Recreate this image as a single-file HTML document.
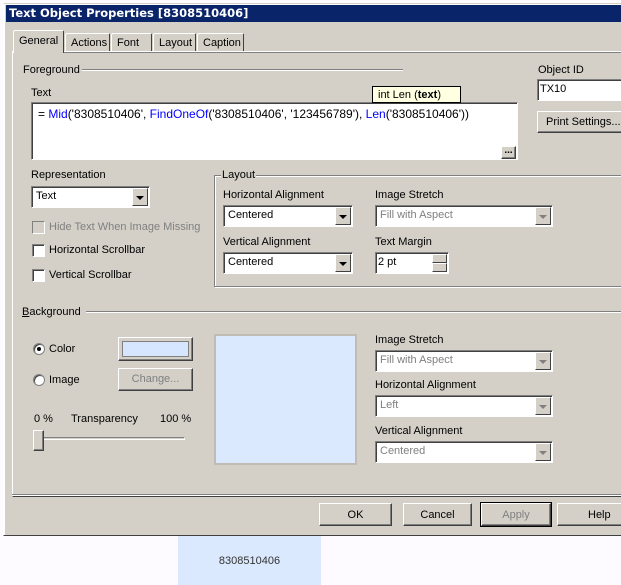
<!DOCTYPE html>
<html><head><meta charset="utf-8"><style>
*{margin:0;padding:0;box-sizing:border-box}
body{width:621px;height:585px;background:#fdfbff;position:relative;overflow:hidden;font-family:"Liberation Sans",Tahoma,sans-serif;font-size:11px;color:#000}
.a{position:absolute;white-space:nowrap}
#win{position:absolute;left:3px;top:3px;width:622px;height:533px;background:#d4d0c8;border-left:1px solid #fff;border-top:1px solid #d4d0c8;box-shadow:inset 1px 1px 0 #fff;border-bottom:1px solid #404040}
.title{position:absolute;left:6px;top:5px;width:620px;height:17px;background:#0a246a;color:#fff;font-weight:bold;padding:1px 0 0 3px;font-family:"DejaVu Sans",sans-serif;font-size:11.5px}
.sunk{position:absolute;background:#fff;border:1px solid;border-color:#808080 #fff #fff #808080;box-shadow:inset 1px 1px 0 #404040}
.btn{position:absolute;background:#d4d0c8;border:1px solid;border-color:#fff #404040 #404040 #fff;box-shadow:inset -1px -1px 0 #808080;text-align:center}
.tab{position:absolute;background:#d4d0c8;border:1px solid;border-bottom:none;border-color:#fff #404040 #404040 #fff;border-radius:2px 2px 0 0;padding:3px 0 0 5px;height:20px}
.dd{position:absolute;right:1px;top:1px;bottom:1px;width:16px;background:#d4d0c8;border:1px solid;border-color:#fff #404040 #404040 #fff}
.dd:after{content:"";position:absolute;left:3px;top:7px;border:4px solid transparent;border-top:4px solid #000;border-bottom:none}
.dis .dd:after{border-top-color:#808080}
.dis{color:#808080}
.sel{padding:3px 0 0 4px}
.cb{position:absolute;width:13px;height:13px;background:#fff;border:1px solid;border-color:#808080 #fff #fff #808080;box-shadow:inset 1px 1px 0 #404040}
.rd{position:absolute;width:12px;height:12px;border-radius:50%;background:#fff;border:1px solid #808080;box-shadow:inset 1px 1px 0 #404040}
.hl{position:absolute;height:2px;border-top:1px solid #808080;border-bottom:1px solid #fff}
.blue{color:#0000ff}
</style></head><body>
<div id="win"></div>
<div class="title">Text Object Properties [8308510406]</div>

<div class="tab" style="left:65px;top:33px;width:45px">Actions</div>
<div class="tab" style="left:111px;top:33px;width:41px">Font</div>
<div class="tab" style="left:153px;top:33px;width:43px">Layout</div>
<div class="tab" style="left:197px;top:33px;width:47px">Caption</div>
<div style="position:absolute;left:12px;top:51px;width:612px;height:446px;border-left:1px solid #fff;border-top:1px solid #fff;border-bottom:1px solid #404040;box-shadow:0 1px 0 #808080 inset"></div>
<div class="hl" style="left:12px;top:494px;width:612px"></div>
<div class="tab" style="left:13px;top:30px;width:51px;height:23px;border-bottom:none;z-index:2;padding-top:4px">General</div>

<div class="a" style="left:23px;top:64px">Foreground</div>
<div class="hl" style="left:82px;top:69px;width:321px"></div>
<div class="a" style="left:31px;top:87px">Text</div>
<div class="sunk" style="left:31px;top:102px;width:487px;height:58px"></div>
<div class="a" style="left:38px;top:107px;font-size:12px">= <span class="blue">Mid</span>('8308510406', <span class="blue">FindOneOf</span>('8308510406', '123456789'), <span class="blue">Len</span>('8308510406'))</div>
<div class="btn" style="left:501px;top:146px;width:15px;height:13px;font-size:10px;line-height:7px;font-weight:bold">...</div>
<div class="a" style="left:372px;top:86px;width:89px;height:17px;background:#ffffe1;border:1px solid #000;padding:2px 0 0 5px">int Len (<b>text</b>)</div>

<div class="a" style="left:538px;top:64px">Object ID</div>
<div class="sunk" style="left:537px;top:79px;width:90px;height:22px"></div>
<div class="a" style="left:540px;top:83px">TX10</div>
<div class="btn" style="left:537px;top:111px;width:90px;height:22px;padding:4px 0 0 8px;text-align:left">Print Settings...</div>

<div class="a" style="left:31px;top:169px">Representation</div>
<div class="sunk sel" style="left:31px;top:186px;width:119px;height:22px">Text<div class="dd"></div></div>
<div class="cb" style="left:32px;top:221px;box-shadow:none;background:#d4d0c8"></div>
<div class="a dis" style="left:49px;top:221px">Hide Text When Image Missing</div>
<div class="cb" style="left:32px;top:244px"></div>
<div class="a" style="left:49px;top:244px">Horizontal Scrollbar</div>
<div class="cb" style="left:32px;top:269px"></div>
<div class="a" style="left:49px;top:269px">Vertical Scrollbar</div>

<div style="position:absolute;left:214px;top:175px;width:412px;height:112px;border:1px solid #808080;box-shadow:inset 1px 1px 0 #fff,1px 1px 0 #fff"></div>
<div class="a" style="left:221px;top:169px;background:#d4d0c8;padding:0 1px">Layout</div>
<div class="a" style="left:223px;top:189px">Horizontal Alignment</div>
<div class="sunk sel" style="left:223px;top:205px;width:130px;height:22px">Centered<div class="dd"></div></div>
<div class="a" style="left:223px;top:236px">Vertical Alignment</div>
<div class="sunk sel" style="left:223px;top:252px;width:130px;height:22px">Centered<div class="dd"></div></div>
<div class="a" style="left:375px;top:189px">Image Stretch</div>
<div class="sunk sel dis" style="left:375px;top:205px;width:178px;height:22px">Fill with Aspect<div class="dd"></div></div>
<div class="a" style="left:375px;top:236px">Text Margin</div>
<div class="sunk" style="left:375px;top:252px;width:74px;height:22px;padding:3px 0 0 2px">2 pt
<div style="position:absolute;right:1px;top:1px;width:15px;height:9px;background:#d4d0c8;border:1px solid;border-color:#fff #404040 #404040 #fff"></div>
<div style="position:absolute;right:1px;top:10px;width:15px;height:9px;background:#d4d0c8;border:1px solid;border-color:#fff #404040 #404040 #fff"></div></div>

<div class="a" style="left:22px;top:306px"><u>B</u>ackground</div>
<div class="hl" style="left:86px;top:311px;width:540px"></div>
<div class="rd" style="left:33px;top:343px"><div style="position:absolute;left:3px;top:3px;width:4px;height:4px;border-radius:50%;background:#000"></div></div>
<div class="a" style="left:49px;top:343px">Color</div>
<div class="btn" style="left:118px;top:337px;width:75px;height:24px"><div style="position:absolute;left:3px;top:3px;right:3px;bottom:3px;background:#d6e6ff;border:1px solid #808080"></div></div>
<div class="rd" style="left:33px;top:374px"></div>
<div class="a" style="left:49px;top:374px">Image</div>
<div class="btn dis" style="left:118px;top:368px;width:75px;height:23px;padding-top:4px">Change...</div>
<div class="a" style="left:34px;top:413px">0 %</div>
<div class="a" style="left:71px;top:413px">Transparency</div>
<div class="a" style="left:160px;top:413px">100 %</div>
<div style="position:absolute;left:35px;top:437px;width:150px;height:3px;border:1px solid;border-color:#808080 #fff #fff #808080"></div>
<div class="btn" style="left:33px;top:430px;width:11px;height:21px"></div>
<div style="position:absolute;left:214px;top:334px;width:143px;height:131px;background:#dbe9ff;border:2px solid #c0bcb4"></div>

<div class="a" style="left:375px;top:334px">Image Stretch</div>
<div class="sunk sel dis" style="left:375px;top:350px;width:178px;height:22px">Fill with Aspect<div class="dd"></div></div>
<div class="a" style="left:375px;top:379px">Horizontal Alignment</div>
<div class="sunk sel dis" style="left:375px;top:395px;width:178px;height:22px">Left<div class="dd"></div></div>
<div class="a" style="left:375px;top:425px">Vertical Alignment</div>
<div class="sunk sel dis" style="left:375px;top:441px;width:178px;height:22px">Centered<div class="dd"></div></div>

<div class="btn" style="left:319px;top:503px;width:73px;height:23px;padding-top:5px">OK</div>
<div class="btn" style="left:403px;top:503px;width:69px;height:23px;padding-top:5px">Cancel</div>
<div class="btn dis" style="left:481px;top:503px;width:70px;height:23px;padding-top:5px;outline:1px solid #000">Apply</div>
<div class="btn" style="left:557px;top:503px;width:70px;height:23px;padding:5px 0 0 0;text-align:left;text-indent:30px">Help</div>

<div style="position:absolute;left:0;top:536px;width:621px;height:49px;background:#fdfbff"></div>
<div style="position:absolute;left:178px;top:536px;width:143px;height:49px;background:#dbe9ff;color:#333;text-align:center;padding-top:19px;font-size:11px">8308510406</div>
</body></html>
